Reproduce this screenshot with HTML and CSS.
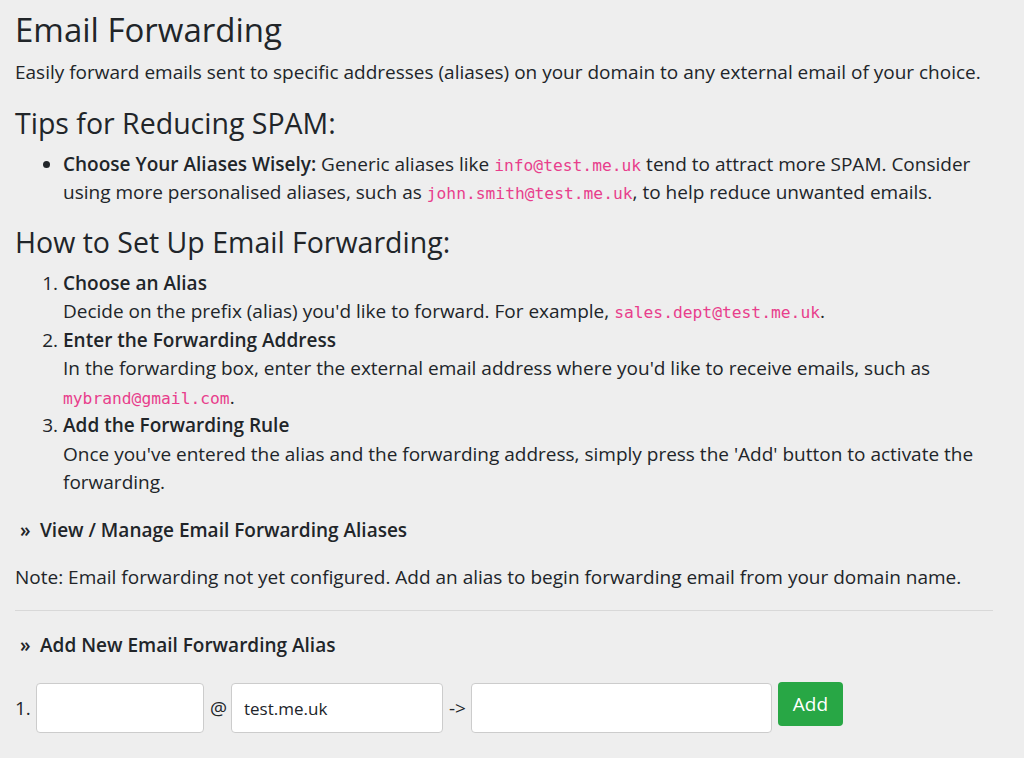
FILE: index.html
```html
<!DOCTYPE html>
<html lang="en">
<head>
<meta charset="utf-8">
<title>Email Forwarding</title>
<link rel="stylesheet" href="styles.css">
</head>
<body>
<main class="page">
  <h1 class="title">Email Forwarding</h1>
  <p class="lead">Easily forward emails sent to specific addresses (aliases) on your domain to any external email of your choice.</p>

  <h2 class="heading">Tips for Reducing SPAM:</h2>
  <ul class="tips">
    <li><strong>Choose Your Aliases Wisely:</strong> Generic aliases like <code>info@test.me.uk</code> tend to attract more SPAM. Consider using more personalised aliases, such as <code>john.smith@test.me.uk</code>, to help reduce unwanted emails.</li>
  </ul>

  <h2 class="heading">How to Set Up Email Forwarding:</h2>
  <ol class="steps">
    <li><strong>Choose an Alias</strong><br>Decide on the prefix (alias) you'd like to forward. For example, <code>sales.dept@test.me.uk</code>.</li>
    <li><strong>Enter the Forwarding Address</strong><br>In the forwarding box, enter the external email address where you'd like to receive emails, such as <code>mybrand@gmail.com</code>.</li>
    <li><strong>Add the Forwarding Rule</strong><br>Once you've entered the alias and the forwarding address, simply press the 'Add' button to activate the forwarding.</li>
  </ol>

  <h3 class="section-toggle"><span class="raquo">&raquo;</span>View / Manage Email Forwarding Aliases</h3>
  <p class="note">Note: Email forwarding not yet configured. Add an alias to begin forwarding email from your domain name.</p>
  <hr class="divider">
  <h3 class="section-toggle"><span class="raquo">&raquo;</span>Add New Email Forwarding Alias</h3>

  <form class="alias-form">
    <span class="num">1.</span>
    <input class="field field-alias" type="text">
    <span class="sep sep-at">@</span>
    <input class="field field-domain" type="text" value="test.me.uk">
    <span class="sep sep-arrow">-&gt;</span>
    <input class="field field-target" type="text">
    <button class="btn-add" type="button">Add</button>
  </form>
</main>
</body>
</html>
```
FILE: styles.css
```css
html, body {
  margin: 0;
  padding: 0;
  background: #eeeeee;
}
body {
  font-family: "Open Sans", "Noto Sans", sans-serif;
  font-size: 19px;
  line-height: 28.5px;
  color: #212529;
}
.page {
  padding: 10px 31px 0 15px;
}
.title {
  font-size: 33px;
  font-weight: 400;
  line-height: 40px;
  margin: 0 0 8px;
}
.lead {
  margin: 0 0 19px;
}
.heading {
  font-size: 28.5px;
  font-weight: 400;
  line-height: 34px;
  margin: 0 0 9px;
}
.tips, .steps {
  padding-left: 48px;
}
.tips { margin: 10px 0 18px; }
.steps { margin: 10px 0 19px; }
strong { font-weight: 600; }
code {
  font-family: "DejaVu Sans Mono", "Liberation Mono", monospace;
  font-size: 16.3px;
  line-height: 1;
  color: #e83e8c;
}
.section-toggle {
  font-size: 19px;
  font-weight: 600;
  margin: 0 0 19px;
  line-height: 28.5px;
  padding-left: 5px;
}
.raquo {
  display: inline-block;
  width: 20px;
}
.note { margin: 0 0 18px; }
.divider {
  border: 0;
  border-top: 1px solid #d8d8d8;
  margin: 0 0 20px;
}
.alias-form {
  display: flex;
  align-items: center;
  gap: 6px;
  margin-top: 24px;
}
.num { width: 15px; }
.sep { white-space: nowrap; text-align: center; }
.sep-at { width: 15px; }
.sep-arrow { width: 16px; }
.field {
  height: 50px;
  box-sizing: border-box;
  border: 1px solid #cccccc;
  border-radius: 4px;
  background: #fff;
  font-family: inherit;
  font-size: 17px;
  color: #212529;
  padding: 0 12px;
}
.field-alias { width: 168px; }
.field-domain { width: 212px; }
.field-target { width: 301px; }
.btn-add {
  height: 44px;
  width: 65px;
  padding: 0;
  background: #28a745;
  color: #fff;
  border: 0;
  border-radius: 4px;
  font-family: inherit;
  font-size: 19px;
  align-self: flex-start;
  margin-top: -1px;
}
```
